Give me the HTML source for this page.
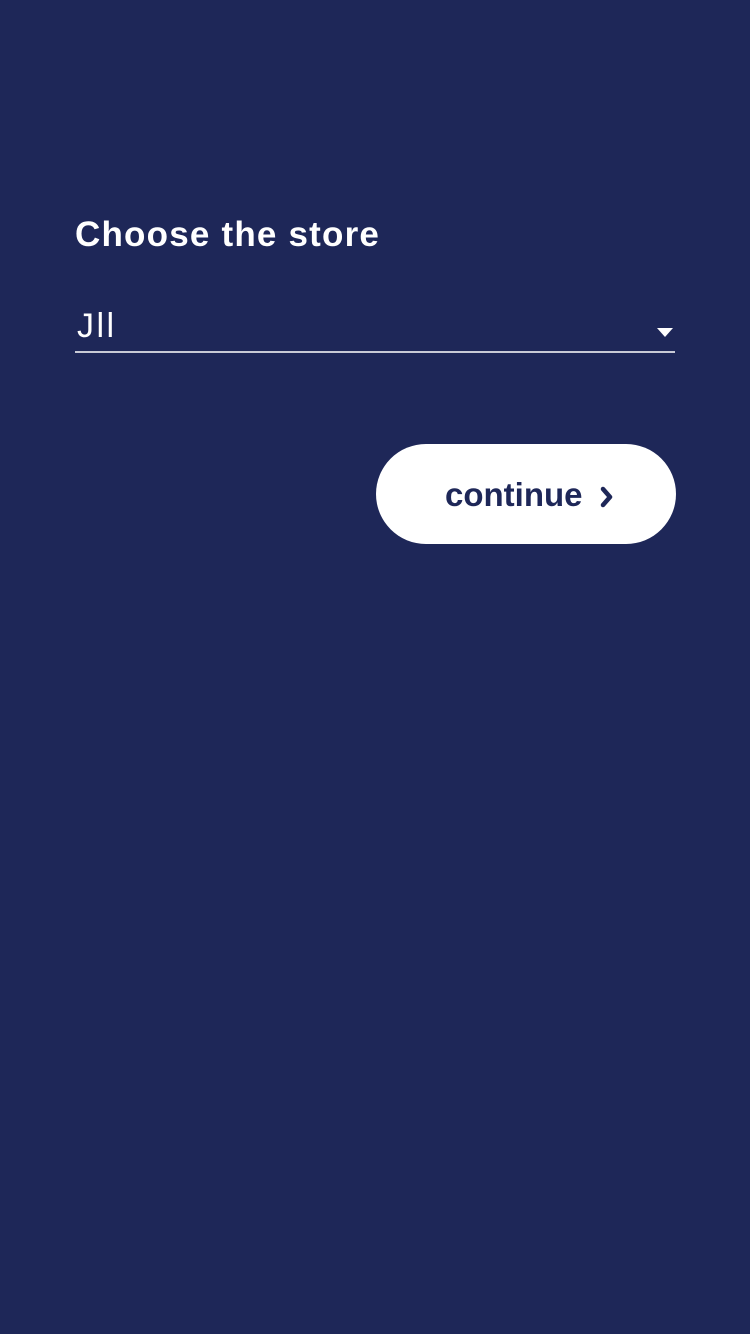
<!DOCTYPE html>
<html><head><meta charset="utf-8"><style>
html,body{margin:0;padding:0;}
body{width:750px;height:1334px;background:#1e2758;position:relative;overflow:hidden;font-family:"Liberation Sans",sans-serif;}
.t{position:absolute;left:75px;top:213px;color:#fff;font-weight:bold;font-size:35px;letter-spacing:1.2px;line-height:44px;white-space:nowrap;}
.v{position:absolute;left:77px;top:306px;color:#fff;font-size:34px;letter-spacing:2.5px;line-height:40px;}
.line{position:absolute;left:75px;top:351px;width:600px;height:2px;background:#c8cad6;}
.tri{position:absolute;left:657px;top:328px;width:0;height:0;border-left:8px solid transparent;border-right:8px solid transparent;border-top:9px solid #fff;}
.btn{position:absolute;left:376px;top:444px;width:300px;height:100px;border-radius:50px;background:#fff;}
.bt{position:absolute;left:445px;top:475px;color:#1e2758;font-weight:bold;font-size:33px;line-height:40px;white-space:nowrap;}
</style></head><body>
<div class="t">Choose the store</div>
<div class="v">Jll</div>
<div class="tri"></div>
<div class="line"></div>
<div class="btn"></div>
<div class="bt">continue</div>
<svg style="position:absolute;left:598px;top:485px" width="18" height="24" viewBox="0 0 18 24"><path d="M5 4 L12 12 L5 20" stroke="#1e2758" stroke-width="4.5" fill="none" stroke-linecap="round" stroke-linejoin="round"/></svg>
</body></html>
